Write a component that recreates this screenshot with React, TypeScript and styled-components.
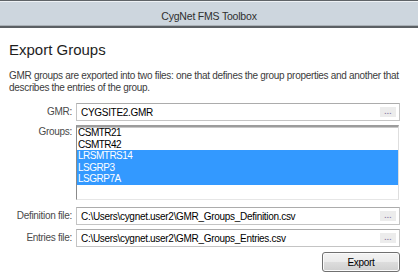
import React from 'react'
import styled, { createGlobalStyle } from 'styled-components'

const GlobalStyle = createGlobalStyle`
  html, body {
    margin: 0;
    padding: 0;
    background: #ffffff;
  }
  body {
    font-family: 'Liberation Sans', Arial, sans-serif;
  }
`

type GroupItem = {
  name: string;
  selected?: boolean;
}

const groups: GroupItem[] = [
  { name: 'CSMTR21' },
  { name: 'CSMTR42' },
  { name: 'LRSMTRS14', selected: true },
  { name: 'LSGRP3', selected: true },
  { name: 'LSGRP7A', selected: true },
]

type FieldPropsType = {
  label: string;
  value: string;
}

const PathField = (props: FieldPropsType) => {
  return (
    <>
      <Label>{props.label}</Label>
      <TextBox>
        <Value>{props.value}</Value>
        <BrowseButton>...</BrowseButton>
      </TextBox>
    </>
  )
}

export default function App() {
  return (
    <Window>
      <GlobalStyle />
      <TitleBar>CygNet FMS Toolbox</TitleBar>

      <Content>
        <Heading>Export Groups</Heading>
        <Description>
          GMR groups are exported into two files: one that defines the group properties and another that
          describes the entries of the group.
        </Description>

        <Form>
          <PathField label='GMR:' value='CYGSITE2.GMR' />

          <Label $top>Groups:</Label>
          <ListBox>
            {groups.map((g) => (
              <ListItem key={g.name} $selected={g.selected}>{g.name}</ListItem>
            ))}
          </ListBox>

          <PathField label='Definition file:' value='C:\Users\cygnet.user2\GMR_Groups_Definition.csv' />
          <PathField label='Entries file:' value='C:\Users\cygnet.user2\GMR_Groups_Entries.csv' />

          <Footer>
            <ExportButton>Export</ExportButton>
          </Footer>
        </Form>
      </Content>
    </Window>
  )
}

const Window = styled.div`
  width: 418px;
  height: 273px;
  overflow: hidden;
  background: #ffffff;
`

const TitleBar = styled.div`
  height: 21px;
  display: flex;
  align-items: center;
  justify-content: center;
  padding-top: 4px;
  background: #cdd6de;
  border-top: 1px solid #5f6468;
  border-bottom: 2px solid #5b6064;
  box-shadow: inset 0 1px 0 #eef2f5, inset 0 -1px 0 #a9b0b6;
  font-size: 10.5px;
  letter-spacing: -0.2px;
  color: #2f2f2f;
`

const Content = styled.div`
  padding: 0 18px 0 9px;
`

const Heading = styled.h1`
  margin: 13px 0 0 0;
  font-size: 15px;
  line-height: 18px;
  font-weight: normal;
  color: #1e1e1e;
`

const Description = styled.p`
  margin: 11px 0 0 0;
  font-size: 10px;
  line-height: 12px;
  letter-spacing: -0.3px;
  color: #3c3c3c;
`

const Form = styled.div`
  display: grid;
  grid-template-columns: 63px 1fr;
  column-gap: 4px;
  row-gap: 4px;
  margin-top: 9px;
`

const Label = styled.div<{ $top?: boolean }>`
  display: flex;
  justify-content: flex-end;
  align-items: ${(p) => (p.$top ? 'flex-start' : 'center')};
  padding-top: ${(p) => (p.$top ? '1px' : '0')};
  font-size: 10px;
  line-height: 12px;
  letter-spacing: -0.3px;
  color: #4a4a4a;
  white-space: nowrap;
`

const TextBox = styled.div`
  display: flex;
  align-items: center;
  height: 18px;
  box-sizing: border-box;
  border: 1px solid #c4c4c4;
  border-top-color: #acacac;
  padding: 0 3px 0 4px;
  background: #ffffff;
`

const Value = styled.span`
  flex: 1;
  font-size: 10px;
  letter-spacing: -0.3px;
  color: #000000;
  white-space: nowrap;
  overflow: hidden;
`

const BrowseButton = styled.span`
  width: 16px;
  height: 10px;
  display: flex;
  align-items: center;
  justify-content: center;
  background: #ececec;
  font-size: 8px;
  font-weight: bold;
  line-height: 6px;
  letter-spacing: 0.3px;
  color: #8c7fa6;
`

const ListBox = styled.div`
  height: 75px;
  box-sizing: border-box;
  margin-bottom: 3px;
  margin-right: 1px;
  border-top: 2px solid #9c9c9c;
  border-left: 1px solid #8a8a8a;
  border-right: 1px solid #dedede;
  border-bottom: 1px solid #e6e6e6;
  box-shadow: inset 0 1px 0 #c8c8c8;
  background: #ffffff;
`

const ListItem = styled.div<{ $selected?: boolean }>`
  height: 11.5px;
  line-height: 11.5px;
  padding-left: 1px;
  font-size: 10px;
  letter-spacing: -0.5px;
  color: ${(p) => (p.$selected ? '#ffffff' : '#000000')};
  background: ${(p) => (p.$selected ? '#3399ff' : 'transparent')};
`

const Footer = styled.div`
  grid-column: 2;
  display: flex;
  justify-content: flex-end;
  margin-top: 1px;
`

const ExportButton = styled.button`
  width: 78px;
  height: 20px;
  padding: 0;
  border: 1px solid #707070;
  border-radius: 3px;
  background: linear-gradient(#f3f3f3 0%, #ebebeb 48%, #dddddd 52%, #cfcfcf 100%);
  box-shadow: inset 0 0 0 1px #fbfbfb;
  font-family: 'Liberation Sans', Arial, sans-serif;
  font-size: 10px;
  letter-spacing: -0.3px;
  color: #000000;
`
